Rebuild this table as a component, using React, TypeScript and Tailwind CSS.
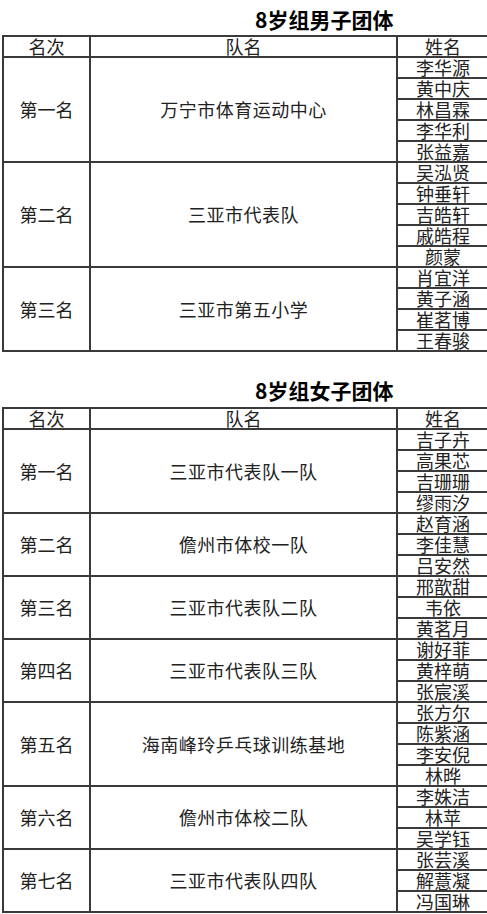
type Group = { rank: string; team: string; names: string[] };

const boys: Group[] = [
  { rank: '第一名', team: '万宁市体育运动中心', names: ['李华源', '黄中庆', '林昌霖', '李华利', '张益嘉'] },
  { rank: '第二名', team: '三亚市代表队', names: ['吴泓贤', '钟垂轩', '吉皓轩', '戚皓程', '颜蒙'] },
  { rank: '第三名', team: '三亚市第五小学', names: ['肖宜洋', '黄子涵', '崔茗博', '王春骏'] },
];

const girls: Group[] = [
  { rank: '第一名', team: '三亚市代表队一队', names: ['吉子卉', '高果芯', '吉珊珊', '缪雨汐'] },
  { rank: '第二名', team: '儋州市体校一队', names: ['赵育涵', '李佳慧', '吕安然'] },
  { rank: '第三名', team: '三亚市代表队二队', names: ['邢歆甜', '韦依', '黄茗月'] },
  { rank: '第四名', team: '三亚市代表队三队', names: ['谢好菲', '黄梓萌', '张宸溪'] },
  { rank: '第五名', team: '海南峰玲乒乓球训练基地', names: ['张方尔', '陈紫涵', '李安倪', '林晔'] },
  { rank: '第六名', team: '儋州市体校二队', names: ['李姝洁', '林苹', '吴学钰'] },
  { rank: '第七名', team: '三亚市代表队四队', names: ['张芸溪', '解薏凝', '冯国琳'] },
];

const span: Record<number, string> = {
  3: 'row-span-3',
  4: 'row-span-4',
  5: 'row-span-5',
};

function Cell({ children, className = '' }: { children: React.ReactNode; className?: string }) {
  return (
    <div className={`bg-white flex items-center justify-center text-[18px] leading-[19px] text-[#222] ${className}`}>
      {children}
    </div>
  );
}

function ResultTable({ groups }: { groups: Group[] }) {
  return (
    <div className="ml-[2px] w-[488px] bg-[#3a3a3a] p-[2px] grid grid-cols-[85px_305px_90px] auto-rows-[19px] gap-[2px]">
      <Cell>名次</Cell>
      <Cell>队名</Cell>
      <Cell>姓名</Cell>
      {groups.map((g) => (
        <>
          <Cell key={g.rank} className={`col-start-1 ${span[g.names.length]}`}>{g.rank}</Cell>
          <Cell key={g.team} className={`col-start-2 ${span[g.names.length]} tracking-[0.5px]`}>{g.team}</Cell>
          {g.names.map((n) => (
            <Cell key={g.rank + n} className="col-start-3">{n}</Cell>
          ))}
        </>
      ))}
    </div>
  );
}

export default function App() {
  return (
    <div className="w-[487px] h-[914px] overflow-hidden bg-white" style={{ fontFamily: '"Noto Sans CJK SC", "Liberation Sans", sans-serif' }}>
      <h2 className="pl-[255px] pt-[6px] pb-[3px] text-[21px] leading-[26px] font-bold text-black">8岁组男子团体</h2>
      <ResultTable groups={boys} />
      <h2 className="pl-[255px] pt-[25px] pb-[4px] text-[21px] leading-[26px] font-bold text-black">8岁组女子团体</h2>
      <ResultTable groups={girls} />
    </div>
  );
}
